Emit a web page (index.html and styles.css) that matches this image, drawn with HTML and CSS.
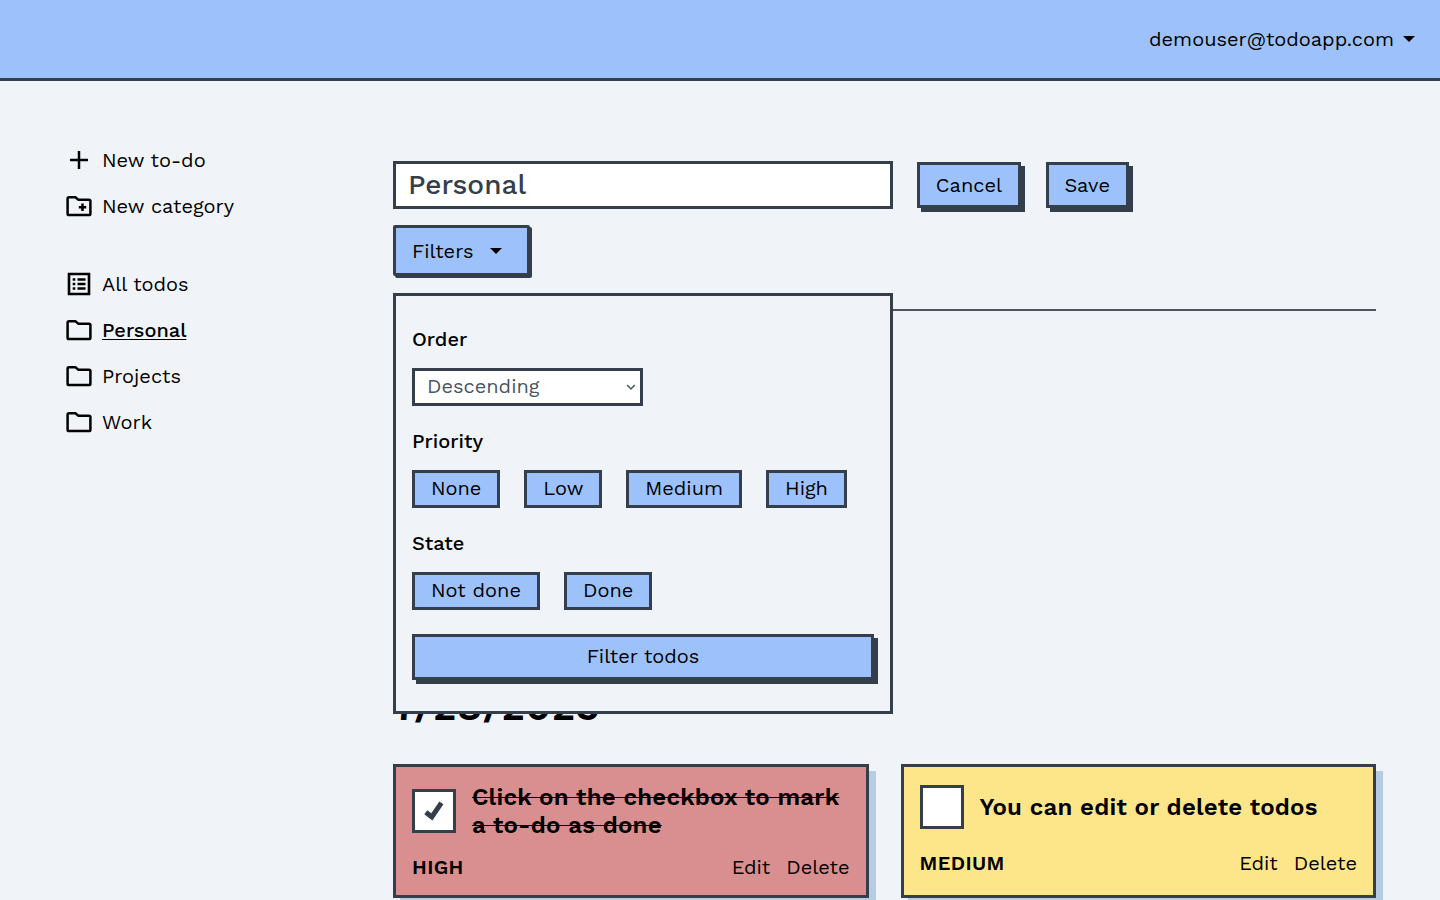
FILE: index.html
```html
<!DOCTYPE html>
<html lang="en">
<head>
<meta charset="utf-8">
<title>Todo app</title>
<link rel="stylesheet" href="styles.css">
</head>
<body>
<svg width="0" height="0" class="defs">
  <symbol id="folder" viewBox="0 0 26 22"><path d="M3 2.300h6.600l2.600 2.400H23q1.400 0 1.400 1.400v12.600q0 1.400-1.400 1.400H3q-1.400 0-1.400-1.400v-15q0-1.400 1.400-1.400z" fill="none" stroke="currentColor" stroke-width="2.500" stroke-linejoin="round"/></symbol>
</svg>
<header class="topbar">
  <button class="account"><span class="email">demouser@todoapp.com</span><i class="caret"></i></button>
</header>
<div class="layout">
  <nav class="sidebar">
    <ul class="group">
      <li class="item"><svg class="icon" viewBox="0 0 26 22"><path d="M13 2v18M4 11h18" fill="none" stroke="currentColor" stroke-width="2.500"/></svg><span>New to-do</span></li>
      <li class="item"><svg class="icon" viewBox="0 0 26 22"><use href="#folder"/><path d="M16.500 8.500v7.400M12.800 12.200h7.400" stroke="currentColor" stroke-width="2.500"/></svg><span>New category</span></li>
    </ul>
    <ul class="group">
      <li class="item"><svg class="icon" viewBox="0 0 26 22"><path d="M3 1h20v20H3z" fill="none" stroke="currentColor" stroke-width="2.600"/><path d="M6.700 6.500h2.600M6.700 11h2.600M6.700 15.500h2.600M11.500 6.500h8M11.500 11h8M11.500 15.500h8" stroke="currentColor" stroke-width="2.300"/></svg><span>All todos</span></li>
      <li class="item"><svg class="icon"><use href="#folder"/></svg><span class="current">Personal</span></li>
      <li class="item"><svg class="icon"><use href="#folder"/></svg><span>Projects</span></li>
      <li class="item"><svg class="icon"><use href="#folder"/></svg><span>Work</span></li>
    </ul>
  </nav>
  <main class="content">
    <div class="edit-row">
      <input class="name-input" type="text" value="Personal" aria-label="Category name">
      <button class="btn raised cancel">Cancel</button>
      <button class="btn raised save">Save</button>
    </div>
    <div class="filters">
      <button class="btn filters-toggle"><span>Filters</span><i class="caret"></i></button>
      <section class="panel">
        <h3 class="label">Order</h3>
        <div class="select"><span>Descending</span><svg class="chevron" viewBox="0 0 10 8"><path d="M1.200 2l3.800 4 3.800-4" fill="none" stroke="currentColor" stroke-width="1.500"/></svg></div>
        <h3 class="label">Priority</h3>
        <div class="chips">
          <button class="btn chip none">None</button><button class="btn chip low">Low</button><button class="btn chip medium">Medium</button><button class="btn chip high">High</button>
        </div>
        <h3 class="label">State</h3>
        <div class="chips">
          <button class="btn chip notdone">Not done</button><button class="btn chip done">Done</button>
        </div>
        <button class="btn raised submit">Filter todos</button>
      </section>
    </div>
    <hr class="rule">
    <h2 class="date">7/28/2023</h2>
    <div class="cards">
      <article class="card red">
        <div class="card-head">
          <span class="check"><svg class="tick" viewBox="0 0 20 20"><path d="M1.800 11.200l6 4.600L17.400 1.800" fill="none" stroke="currentColor" stroke-width="5"/></svg></span>
          <h3 class="title struck">Click on the checkbox to mark<br>a to-do as done</h3>
        </div>
        <div class="card-foot"><strong class="prio">HIGH</strong><span>Edit</span><span>Delete</span></div>
      </article>
      <article class="card yellow">
        <div class="card-head">
          <span class="check"></span>
          <h3 class="title">You can edit or delete todos</h3>
        </div>
        <div class="card-foot"><strong class="prio">MEDIUM</strong><span>Edit</span><span>Delete</span></div>
      </article>
    </div>
  </main>
</div>
</body>
</html>
```
FILE: styles.css
```css
* { box-sizing: border-box; margin: 0; padding: 0; }
html { height: 100%; overflow: hidden; }
body {
  height: 100%;
  overflow: hidden;
  background: #f0f4f9;
  color: #000;
  font: 400 20px/26px "Work Sans", Inter, sans-serif;
}
button, input { font: inherit; color: inherit; }
ul { list-style: none; }
.defs { position: absolute; }
.topbar {
  height: 81px;
  background: #9dc2fb;
  border-bottom: 3px solid #343f4b;
  display: flex;
  justify-content: flex-end;
  align-items: center;
  padding-right: 25px;
}
.account { display: flex; align-items: center; gap: 10px; background: none; border: 0; }
.email { width: 244px; text-align: left; white-space: nowrap; }
.caret { border: 6px solid transparent; border-top-color: #000; border-bottom: 0; }
.layout { display: flex; padding: 0 64px 0 66px; }
.sidebar { width: 327px; padding-top: 56px; }
.group { margin-bottom: 32px; }
.item { height: 46px; display: flex; align-items: center; gap: 10px; white-space: nowrap; }
.icon { width: 26px; height: 22px; flex: none; overflow: visible; }
.current { font-weight: 500; text-decoration: underline; text-decoration-thickness: 1px; text-underline-offset: 2px; }
.content { width: 983px; padding-top: 80px; }
.edit-row { display: flex; align-items: center; height: 48px; }
.name-input {
  width: 500px;
  height: 48px;
  padding: 0 12px 2px;
  border: 3px solid #343f4b;
  background: #fff;
  color: #343f4b;
  font-size: 28px;
  font-weight: 500;
  border-radius: 0;
}
.btn {
  background: #9dc2fb;
  border: 3px solid #343f4b;
  white-space: nowrap;
  text-align: center;
}
.raised { height: 46px; box-shadow: 4px 4px #343f4b; }
.cancel { width: 104px; margin-left: 24px; }
.save { width: 83.500px; margin-left: 24.500px; }
.filters { position: relative; margin-top: 16px; height: 51px; }
.filters-toggle {
  width: 137px;
  height: 51px;
  display: flex;
  align-items: center;
  gap: 17px;
  padding-left: 16px;
  border-radius: 2px;
  box-shadow: 2px 2px #343f4b;
}
.panel {
  position: absolute;
  z-index: 2;
  left: 0;
  top: 67.500px;
  width: 500px;
  height: 421.500px;
  padding: 31px 16px 0;
  border: 3px solid #343f4b;
  background: #f0f4f9;
}
.label { font-size: 20px; font-weight: 500; line-height: 24px; height: 26px; margin-bottom: 15px; }
.select {
  width: 231px;
  height: 38px;
  margin-bottom: 23px;
  border: 3px solid #343f4b;
  background: #fff;
  color: #4a5562;
  display: flex;
  align-items: center;
  justify-content: space-between;
  padding: 0 4px 2px 12px;
}
.chevron { width: 10px; height: 8px; position: relative; top: 1px; }
.chips { display: flex; gap: 24px; margin-bottom: 23px; }
.chip { height: 38px; padding-bottom: 2px; }
.none, .done { width: 88.400px; }
.low { width: 78px; }
.medium { width: 115.600px; }
.high { width: 81px; }
.notdone { width: 128px; }
.submit { width: 462px; display: block; margin-top: 24px; padding-bottom: 1px; }
.rule { height: 2px; border: 0; background: #4a5560; margin-top: 33px; }
.date { margin-top: 374px; height: 44px; font-size: 40px; line-height: 44px; font-weight: 600; letter-spacing: .65px; }
.cards { display: flex; gap: 32px; margin-top: 35px; }
.card {
  width: 475.500px;
  height: 133.500px;
  border: 3px solid #343f4b;
  box-shadow: 7px 7px #b5cce2;
  padding: 16px;
}
.red { background: #d98f8f; }
.yellow { background: #fde68a; padding-top: 12px; }
.card-head { display: flex; align-items: center; gap: 16px; height: 56px; }
.check { width: 44px; height: 44px; flex: none; border: 3px solid #343f4b; background: #fff; display: grid; place-items: center; color: #343f4b; }
.tick { width: 20px; height: 20px; }
.title { font-size: 24px; line-height: 28px; font-weight: 600; letter-spacing: .22px; white-space: nowrap; }
.struck { text-decoration: line-through; text-decoration-thickness: 1px; }
.card-foot { display: flex; gap: 16px; margin-top: 15px; }
.prio { font-weight: 600; letter-spacing: .35px; margin-right: auto; }
```
